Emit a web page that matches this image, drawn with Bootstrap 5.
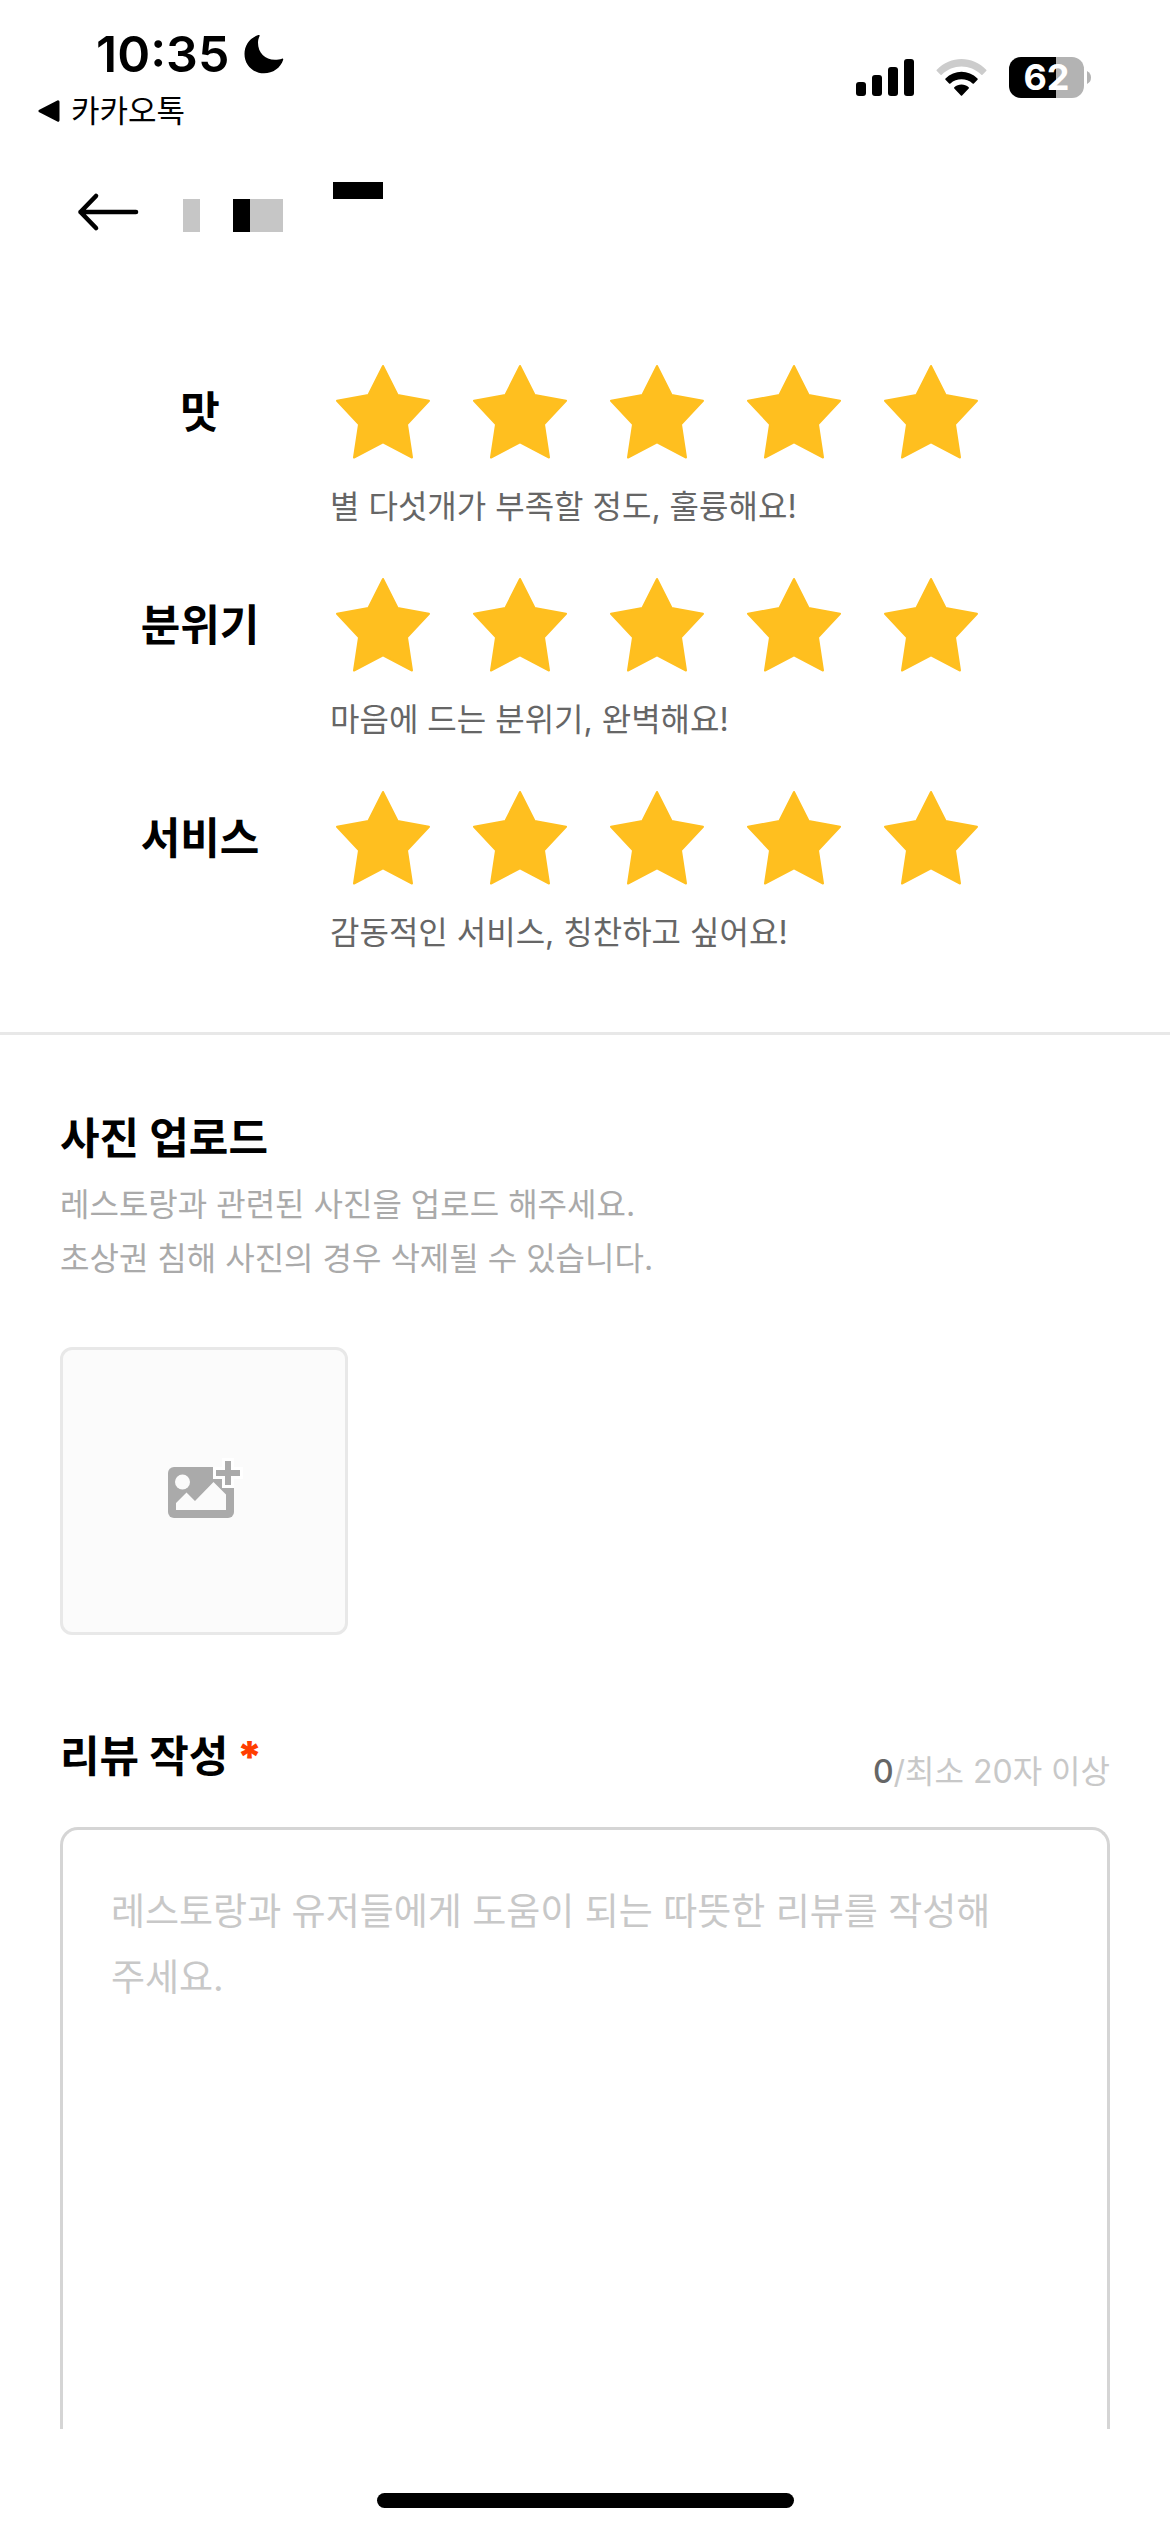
<!DOCTYPE html>
<html lang="ko">
<head>
<meta charset="utf-8">
<meta name="viewport" content="width=device-width, initial-scale=1">
<title>리뷰 작성</title>
<link href="https://cdn.jsdelivr.net/npm/bootstrap@5.3.0/dist/css/bootstrap.min.css" rel="stylesheet">
<style>
  body { font-family: Inter, "Noto Sans CJK KR", sans-serif; color: #000; background: #fff; }
  svg { display: block; flex: none; }
  .status-bar { height: 140px; padding: 28px 79px 0 38px; }
  .clock { font-size: 50px; line-height: 52px; font-weight: 600; padding-left: 58px; gap: 15px; }
  .back-app { font-size: 31px; line-height: 40px; margin-top: 11px; gap: 10px; }
  .status-icons { margin-top: 29px; gap: 22px; }
  .battery { gap: 3px; }
  .battery-body { width: 75px; height: 41px; border-radius: 12px; font-size: 36px; line-height: 41px; font-weight: 700;
    background: linear-gradient(90deg, #000 47px, #b3b3b3 47px); }
  .top-bar { height: 144px; padding-left: 76px; gap: 43px; }
  .ratings { padding: 75px 70px 76px; border-bottom: 3px solid #e8e8e8; gap: 42px; }
  .rating-label { width: 260px; height: 106px; }
  .section-title { font-size: 43px; line-height: 56px; font-weight: 700; }
  .stars { gap: 31px; }
  .star-btn { width: 106px; height: 106px; }
  .caption-text { font-size: 32px; line-height: 48px; margin-top: 18px; margin-bottom: -1px; color: #666; }
  .form-area { padding: 75px 60px 0; }
  .hint { font-size: 32px; line-height: 54px; margin-top: 12px; color: #aaa; }
  .upload-box { width: 288px; height: 288px; margin-top: 61px; border: 3px solid #e8e8e8; border-radius: 12px; background: #fbfbfb; }
  .review-head { margin-top: 93px; height: 68px; }
  .required { color: #ff3d00; font-weight: 900; margin-left: 8px; }
  .counter { font-size: 32px; line-height: 48px; color: #c8c8c8; }
  .counter span { color: #666; font-weight: 500; }
  .review-input { min-height: 400px; margin-top: 31px; border: 3px solid #d5d5d5; border-bottom: 0; border-radius: 18px 18px 0 0;
    padding: 49px 96px 0 48px; font-size: 37px; line-height: 66px; resize: none; }
  .review-input::placeholder { color: #c8c8c8; opacity: 1; }
  .home-bar { height: 103px; padding-top: 64px; }
  .home-pill { width: 417px; height: 15px; border-radius: 8px; }
</style>
<script src="https://cdn.jsdelivr.net/npm/bootstrap@5.3.0/dist/js/bootstrap.bundle.min.js"></script>
</head>
<body class="d-flex flex-column min-vh-100">

<svg width="0" height="0" class="position-absolute" aria-hidden="true">
  <symbol id="star" viewBox="0 0 106 106">
    <path d="M53 7 67.600 36 99 41.700 77 65.300 82 98.500 53 83.300 24 98.500 29 65.300 7 41.700 38.400 36Z" fill="#ffbf1f" stroke="#ffbf1f" stroke-width="2" stroke-linejoin="round"/>
  </symbol>
</svg>

<div class="status-bar d-flex justify-content-between align-items-start">
  <div>
    <div class="clock d-flex align-items-center"><span>10:35</span>
      <svg width="40" height="40" viewBox="0 0 40 40"><path d="M15 .8C6 3.500 .500 11 .500 20 .500 31 9 39.300 20 39.300c9 0 16.500-5.300 19.200-13.500.3-1-.5-1.400-1.300-1.100-2 .8-4.400 1.100-6.900 1.100-10 0-17-7-17-17 0-2.500.6-4.700 1.500-6.600.4-1-.1-1.700-1-1.400Z"/></svg>
    </div>
    <a href="#" class="back-app d-flex align-items-center text-black text-decoration-none">
      <svg width="23" height="24" viewBox="0 0 23 24"><path d="M20 2.800 2 12l18 9.200Z" stroke="#000" stroke-width="3" stroke-linejoin="round"/></svg>
      <span>카카오톡</span>
    </a>
  </div>
  <div class="status-icons d-flex align-items-center">
    <svg width="58" height="38" viewBox="0 0 58 38"><rect y="23" width="10" height="14" rx="3"/><rect x="16" y="16" width="10" height="21" rx="3"/><rect x="32" y="8" width="10" height="29" rx="3"/><rect x="48" width="10" height="37" rx="3"/></svg>
    <svg width="51" height="38" viewBox="0 0 51 38"><path d="M.8 10.800C14.500-3.600 36.500-3.600 50.200 10.800c.4.400.4.800 0 1.200l-3.700 3.700c-.4.400-.8.400-1.200 0C34.200 4.600 16.800 4.600 5.700 15.700c-.4.400-.8.400-1.200 0L.8 12c-.4-.4-.4-.8 0-1.200Z" fill="#ccc"/><path d="M9.500 19.500c9-9 23-9 32 0 .4.400.4.900 0 1.300l-3.600 3.600c-.4.400-.9.400-1.300 0-6.300-5.600-15.900-5.600-22.200 0-.4.400-.9.400-1.300 0l-3.600-3.600c-.4-.4-.4-.9 0-1.300Z"/><path d="M18.300 28.300c4.100-3.700 10.300-3.700 14.400 0 .4.400.4.900 0 1.300l-6.600 6.800c-.4.400-.8.400-1.200 0l-6.600-6.800c-.4-.4-.4-.9 0-1.300Z"/></svg>
    <div class="battery d-flex align-items-center">
      <div class="battery-body text-white text-center">62</div>
      <svg width="4" height="13" viewBox="0 0 4 13"><path d="M0 0q4 2 4 6.500T0 13Z" fill="#b3b3b3"/></svg>
    </div>
  </div>
</div>

<header class="top-bar d-flex align-items-center">
  <button type="button" class="btn p-0 border-0" aria-label="뒤로">
    <svg width="64" height="40" viewBox="0 0 64 40"><path d="M20 4 4.500 20 20 36M4.500 20H60" fill="none" stroke="#000" stroke-width="4.600" stroke-linecap="round" stroke-linejoin="round"/></svg>
  </button>
  <svg width="200" height="60" viewBox="0 0 200 60" shape-rendering="crispEdges" aria-hidden="true"><path d="M0 17h17v33H0ZM67 17h33v33H67Z" fill="#c6c6c6"/><path d="M50 17h17v33H50ZM150 0h50v17H150Z"/></svg>
</header>

<section class="ratings d-flex flex-column">
  <div class="d-flex">
    <div class="rating-label section-title d-flex align-items-center justify-content-center">맛</div>
    <div>
      <div class="stars d-flex">
        <button type="button" class="star-btn btn p-0 border-0" aria-label="맛 1점"><svg width="106" height="106"><use href="#star"/></svg></button>
        <button type="button" class="star-btn btn p-0 border-0" aria-label="맛 2점"><svg width="106" height="106"><use href="#star"/></svg></button>
        <button type="button" class="star-btn btn p-0 border-0" aria-label="맛 3점"><svg width="106" height="106"><use href="#star"/></svg></button>
        <button type="button" class="star-btn btn p-0 border-0" aria-label="맛 4점"><svg width="106" height="106"><use href="#star"/></svg></button>
        <button type="button" class="star-btn btn p-0 border-0" aria-label="맛 5점"><svg width="106" height="106"><use href="#star"/></svg></button>
      </div>
      <p class="caption-text">별 다섯개가 부족할 정도, 훌륭해요!</p>
    </div>
  </div>
  <div class="d-flex">
    <div class="rating-label section-title d-flex align-items-center justify-content-center">분위기</div>
    <div>
      <div class="stars d-flex">
        <button type="button" class="star-btn btn p-0 border-0" aria-label="분위기 1점"><svg width="106" height="106"><use href="#star"/></svg></button>
        <button type="button" class="star-btn btn p-0 border-0" aria-label="분위기 2점"><svg width="106" height="106"><use href="#star"/></svg></button>
        <button type="button" class="star-btn btn p-0 border-0" aria-label="분위기 3점"><svg width="106" height="106"><use href="#star"/></svg></button>
        <button type="button" class="star-btn btn p-0 border-0" aria-label="분위기 4점"><svg width="106" height="106"><use href="#star"/></svg></button>
        <button type="button" class="star-btn btn p-0 border-0" aria-label="분위기 5점"><svg width="106" height="106"><use href="#star"/></svg></button>
      </div>
      <p class="caption-text">마음에 드는 분위기, 완벽해요!</p>
    </div>
  </div>
  <div class="d-flex">
    <div class="rating-label section-title d-flex align-items-center justify-content-center">서비스</div>
    <div>
      <div class="stars d-flex">
        <button type="button" class="star-btn btn p-0 border-0" aria-label="서비스 1점"><svg width="106" height="106"><use href="#star"/></svg></button>
        <button type="button" class="star-btn btn p-0 border-0" aria-label="서비스 2점"><svg width="106" height="106"><use href="#star"/></svg></button>
        <button type="button" class="star-btn btn p-0 border-0" aria-label="서비스 3점"><svg width="106" height="106"><use href="#star"/></svg></button>
        <button type="button" class="star-btn btn p-0 border-0" aria-label="서비스 4점"><svg width="106" height="106"><use href="#star"/></svg></button>
        <button type="button" class="star-btn btn p-0 border-0" aria-label="서비스 5점"><svg width="106" height="106"><use href="#star"/></svg></button>
      </div>
      <p class="caption-text">감동적인 서비스, 칭찬하고 싶어요!</p>
    </div>
  </div>
</section>

<main class="form-area d-flex flex-column flex-grow-1">
  <h2 class="section-title mb-0">사진 업로드</h2>
  <p class="hint mb-0">레스토랑과 관련된 사진을 업로드 해주세요.<br>초상권 침해 사진의 경우 삭제될 수 있습니다.</p>
  <button type="button" class="upload-box btn p-0 d-flex align-items-center justify-content-center" aria-label="사진 추가">
    <svg width="72" height="60" viewBox="0 6 72 60" overflow="visible">
      <path d="M6 12H60a6 6 0 0 1 6 6V57a6 6 0 0 1-6 6H6a6 6 0 0 1-6-6V18a6 6 0 0 1 6-6Z" fill="#aaa"/>
      <circle cx="14.500" cy="27" r="7.500" fill="#fbfbfb"/>
      <path d="M8 48 18.500 37.500 27 46 45.500 27 58 39.500V55H8Z" fill="#fbfbfb"/>
      <path d="M54 3H66V12H75V24H66V33H54V24H45V12H54Z" fill="#fff"/>
      <path d="M57 6h6v9h9v6h-9v9h-6v-9h-9v-6h9Z" fill="#aaa"/>
    </svg>
  </button>
  <div class="review-head d-flex justify-content-between align-items-start">
    <label for="review" class="section-title">리뷰 작성<span class="required">*</span></label>
    <div class="counter align-self-end"><span>0</span>/최소 20자 이상</div>
  </div>
  <textarea id="review" class="review-input form-control flex-grow-1" placeholder="레스토랑과 유저들에게 도움이 되는 따뜻한 리뷰를 작성해주세요."></textarea>
</main>

<footer class="home-bar d-flex justify-content-center align-items-start"><div class="home-pill bg-black"></div></footer>
</body>
</html>
